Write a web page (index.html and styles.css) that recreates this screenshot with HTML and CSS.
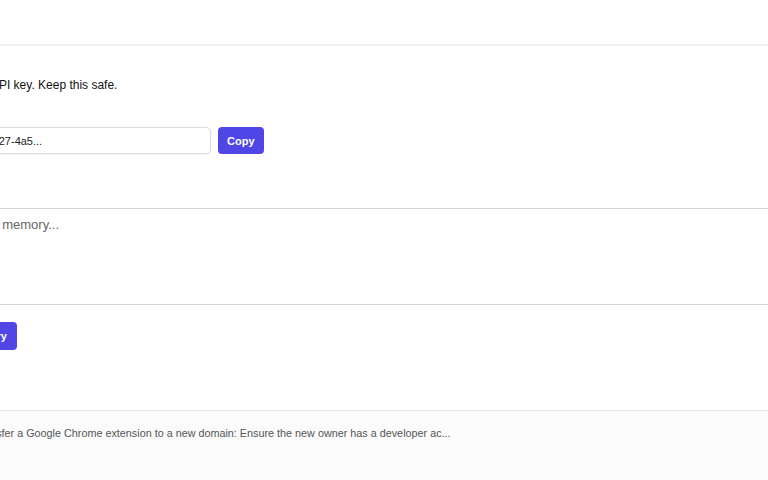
FILE: index.html
```html
<!DOCTYPE html>
<html lang="en">
<head>
  <meta charset="UTF-8">
  <meta name="viewport" content="width=device-width, initial-scale=1.0">
  <title>Settings</title>
  <link rel="stylesheet" href="styles.css">
</head>
<body>

  <!-- Header -->
  <div class="header"></div>

  <!-- API key -->
  <div class="section">
    <p class="hint">Your API key. Keep this safe.</p>
    <div class="key-row">
      <input class="key-input" type="text" value="a9c27-4a5..." readonly>
      <button class="btn">Copy</button>
    </div>
  </div>

  <!-- Memory -->
  <div class="memory">
    <textarea class="memory-box" placeholder="Add to memory..."></textarea>
    <button class="btn save-btn">Save Memory</button>
  </div>

  <!-- History -->
  <div class="history">
    <div class="history-item">How to transfer a Google Chrome extension to a new domain: Ensure the new owner has a developer ac...</div>
  </div>

</body>
</html>
```

FILE: styles.css
```css
/* General Styles */
body {
  font-family: "Liberation Sans", Arial, sans-serif;
  background-color: #fff;
  color: #111;
  margin: 0;
  padding: 0;
  overflow: hidden;
  height: 480px;
}

/* Header */
.header {
  height: 44px;
  border-bottom: 2px solid #f1f1f1;
}

/* API key section */
.section {
  margin-left: -27px;
  padding-top: 31px;
}

.hint {
  margin: 0 0 0 -9px;
  font-size: 12px;
  line-height: 16px;
}

.key-row {
  display: flex;
  align-items: center;
  gap: 7px;
  margin-top: 34px;
}

.key-input {
  width: 238px;
  height: 27px;
  box-sizing: border-box;
  padding: 0 7px;
  border: 1px solid #dcdcdc;
  border-radius: 5px;
  box-shadow: 0 1px 2px rgba(0, 0, 0, 0.05);
  font-family: inherit;
  font-size: 11px;
  color: #222;
  outline: none;
}

.btn {
  height: 27px;
  padding: 0 9px;
  background-color: #4f46e5;
  color: #fff;
  border: none;
  border-radius: 4px;
  font-family: inherit;
  font-size: 11px;
  font-weight: bold;
  cursor: pointer;
}

/* Memory section */
.memory {
  margin-left: -50px;
  margin-top: 54px;
}

.memory-box {
  display: block;
  width: 900px;
  height: 97px;
  box-sizing: border-box;
  padding: 7px 0 0 10px;
  border: 1px solid #d6d6d6;
  resize: none;
  font-family: inherit;
  font-size: 13px;
  line-height: 17px;
  outline: none;
}

.memory-box::placeholder {
  color: #666;
}

.save-btn {
  margin-top: 17px;
  margin-left: -24px;
  padding: 0 10px;
  height: 28px;
}

/* History */
.history {
  margin-top: 60px;
  border-top: 1px solid #e6e6e6;
  background-color: #fbfbfb;
  height: 69px;
}

.history-item {
  margin-left: -59px;
  padding-top: 15px;
  font-size: 10.8px;
  line-height: 14px;
  color: #555;
  white-space: nowrap;
}
```
